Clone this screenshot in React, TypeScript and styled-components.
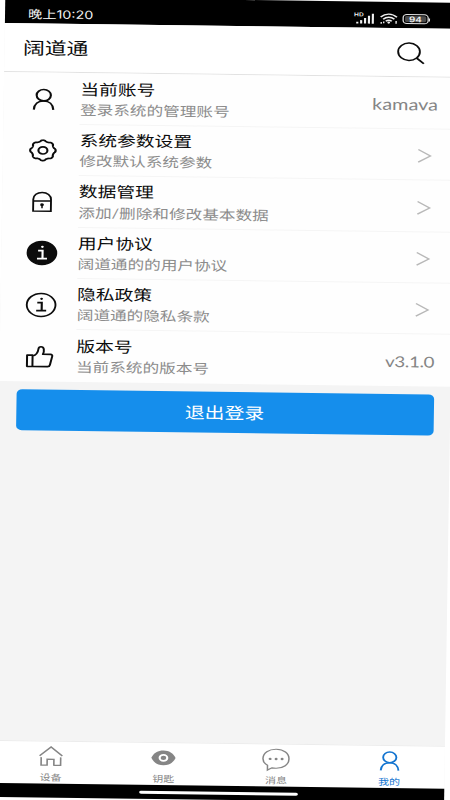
import React from "react";
import styled, { createGlobalStyle } from "styled-components";

const GlobalStyle = createGlobalStyle`
  * { box-sizing: border-box; }
  html, body { margin: 0; padding: 0; background: #fff; overflow: hidden; }
  svg { display: block; flex: none; overflow: visible; }
`;

const Viewport = styled.div`
  width: 450px;
  height: 800px;
  overflow: hidden;
  background: #fff;
`;

const Screen = styled.div`
  width: 361px;
  height: 800px;
  display: flex;
  flex-direction: column;
  background: #f4f4f4;
  color: #0c0c0c;
  font-family: Lato, "Noto Sans CJK SC", sans-serif;
  transform-origin: 0 0;
  transform: matrix(1.25, 0.0162, -0.0156, 1, 5.3, -3.1);
`;

const StatusBar = styled.div`
  height: 26px;
  flex: none;
  display: flex;
  align-items: flex-end;
  justify-content: space-between;
  padding: 0 21px 4px 18.5px;
  background: #000;
  color: #f4f4f4;
`;

const Clock = styled.div`
  font-family: Inter, "Noto Sans CJK SC", sans-serif;
  font-size: 11.4px;
  line-height: 12px;
  margin-bottom: -1.2px;
`;

const StatusIcons = styled.div`
  display: flex;
  align-items: flex-end;
  gap: 4.5px;
`;

const Battery = styled.div`
  position: relative;
  width: 20.5px;
  height: 10px;
  margin-right: 1.5px;
  border: 1px solid #e4e4e4;
  border-radius: 3.5px;
  background: #4c4c4c;
  background-clip: content-box;
  padding: 1px;
  display: flex;
  align-items: center;
  justify-content: center;
  font: 600 7.8px/8px Inter, sans-serif;
  &::after {
    content: "";
    position: absolute;
    right: -2.5px;
    top: 2.5px;
    width: 1.3px;
    height: 3px;
    background: #e4e4e4;
  }
`;

const Header = styled.header`
  height: 49.4px;
  flex: none;
  display: flex;
  align-items: center;
  justify-content: space-between;
  padding: 1px 24.6px 0 14.8px;
  background: #fff;
  border-bottom: 1px solid #e2e2e2;
`;

const AppTitle = styled.h1`
  margin: 0;
  font-size: 17.4px;
  line-height: 22px;
  font-weight: 400;
`;

const List = styled.div`
  flex: none;
  background: #fefefe;
`;

const Row = styled.div`
  display: flex;
  height: 51.4px;
`;

const RowIcon = styled.div`
  width: 61.2px;
  flex: none;
  display: flex;
  align-items: center;
  justify-content: center;
  padding-top: 1px;
  padding-left: 3px;
`;

const RowBody = styled.div<{ $divided: boolean; $link: boolean }>`
  flex: 1;
  display: flex;
  align-items: center;
  justify-content: space-between;
  padding-top: 1.4px;
  padding-right: ${(p) => (p.$link ? 18.6 : 13.5)}px;
  border-bottom: 1px solid ${(p) => (p.$divided ? "#f5f5f5" : "transparent")};
`;

const RowTitle = styled.div`
  font-size: 15px;
  line-height: 20px;
`;

const RowHint = styled.div`
  font-size: 13.3px;
  line-height: 20px;
  margin-top: 1.3px;
  color: #8c8c8c;
`;

const RowValue = styled.div<{ $numeric: boolean }>`
  font-size: ${(p) => (p.$numeric ? 15 : 15.900)}px;
  letter-spacing: ${(p) => (p.$numeric ? -0.3 : 0)}px;
  line-height: 20px;
  padding-top: 1px;
  color: #858585;
`;

const LogoutButton = styled.button`
  flex: none;
  height: 41px;
  margin: 8.5px 13.5px 0;
  padding: 0;
  border: 0;
  border-radius: 4.5px;
  background: #158eec;
  color: #fff;
  font-family: inherit;
  font-size: 15.9px;
`;

const Spacer = styled.div`
  flex: 1;
`;

const TabBar = styled.nav`
  height: 43.5px;
  flex: none;
  display: flex;
  background: #fff;
  border-top: 1px solid #ececec;
`;

const Tab = styled.div<{ $active?: boolean }>`
  flex: 1;
  display: flex;
  flex-direction: column;
  align-items: center;
  padding: 3.2px 0 0 1.6px;
  color: ${(p) => (p.$active ? "#1274d0" : "#858585")};
`;

const TabLabel = styled.div`
  font-size: 8.8px;
  line-height: 12px;
  margin-top: 4px;
`;

const HomeArea = styled.div`
  height: 14px;
  flex: none;
  display: flex;
  justify-content: center;
  padding-top: 5.5px;
  background: #000;
`;

const HomeIndicator = styled.div`
  width: 127px;
  height: 3px;
  border-radius: 2px;
  background: #fff;
`;

const PersonIcon = ({ height = 22, stroke = 1.7 }: { height?: number; stroke?: number }) => (
  <svg width="22" height={height} viewBox="0 0 22 22" fill="none" stroke="currentColor" strokeWidth={stroke}>
    <circle cx="11" cy="6.8" r="5.7" />
    <path d="M3.2 21.3C3.5 15.6 6.8 12.6 11 12.6s7.5 3 7.800 8.700" />
  </svg>
);

const TabPersonIcon = () => (
  <svg width="20" height="23" viewBox="0 0 20 23" fill="none" stroke="currentColor" strokeWidth="1.5">
    <circle cx="10" cy="8.300" r="5.300" />
    <path d="M2.900 21.500C3.200 16.400 6.200 13.600 10 13.600s6.800 2.800 7.100 7.900" />
  </svg>
);

const gearPath = (() => {
  const points: string[] = [];
  for (let i = 0; i <= 160; i++) {
    const angle = (i / 160) * Math.PI * 2;
    const wave = Math.cos(angle * 8);
    const radius = 9.6 + 0.6 * Math.sign(wave) * Math.pow(Math.abs(wave), 0.6);
    points.push(`${(11 + radius * Math.cos(angle)).toFixed(2)} ${(11 + radius * Math.sin(angle)).toFixed(2)}`);
  }
  return `M${points.join("L")}Z`;
})();

const GearIcon = () => (
  <svg width="22" height="22" viewBox="0 0 22 22" fill="none" stroke="currentColor" strokeWidth="1.7" strokeLinejoin="round">
    <path d={gearPath} />
    <circle cx="11" cy="11" r="3.6" />
  </svg>
);

const LockIcon = () => (
  <svg width="16" height="21" viewBox="0 0 16 21" fill="none" stroke="currentColor" strokeWidth="1.5">
    <path d="M.9 19.7V8C.9 3.8 4 1 8 1s7.1 2.8 7.1 7v11.7ZM.9 9.4h14.2" />
    <circle cx="8" cy="13.4" r="1.5" fill="currentColor" stroke="none" />
    <path d="M8 13.5v3.3" strokeWidth="1.2" />
  </svg>
);

const InfoIcon = ({ filled = false }: { filled?: boolean }) => {
  const ink = filled ? "#fff" : "currentColor";
  return (
    <svg width="25" height="25" viewBox="0 0 25 25" fill="none">
      <circle cx="12.5" cy="12.5" r="11.5" fill={filled ? "currentColor" : "none"} stroke="currentColor" strokeWidth="1.5" />
      <circle cx="12.8" cy="6.4" r="1.1" fill={ink} />
      <path d="M9.4 10.200h3.600v7.800M8.600 18.200h8" stroke={ink} strokeWidth="1.7" />
    </svg>
  );
};

const ThumbIcon = () => (
  <svg width="22" height="22" viewBox="0 0 22 22" fill="none" stroke="currentColor" strokeWidth="1.6" strokeLinejoin="round">
    <path d="M.9 9.8h4.4v11.3H.9zM5.3 10.8c3.2-1.3 4.3-3.8 4.6-7.2.2-3.1 3.8-3.1 4.3 0 .3 1.9-.1 3.6-.7 5.2h6.1c1 0 1.7.9 1.4 2l-1.7 8.4c-.2 1.2-.9 1.9-2 1.9h-12" />
  </svg>
);

const SearchIcon = () => (
  <svg width="22" height="22" viewBox="0 0 22 22" fill="none" stroke="#0c0c0c" strokeWidth="1.5">
    <circle cx="9.6" cy="9.6" r="8.7" />
    <path d="M15.8 15.8 21.6 21.4" strokeWidth="1.7" />
  </svg>
);

const ChevronIcon = () => (
  <svg width="10.5" height="17" viewBox="0 0 10.5 17" fill="none" stroke="#b8b8b8" strokeWidth="1.3">
    <path d="M.3 3.200 10 9.500 .3 15.800" />
  </svg>
);

const SignalIcon = () => (
  <svg width="15.5" height="11" viewBox="0 0 15.5 11" fill="#f0f0f0">
    <text x="-.8" y="3.8" fontSize="5.2" fontWeight="600" fontFamily="Inter, sans-serif">HD</text>
    <path d="M1 9.2h1.7V11H1zM4.1 7.6h1.7V11H4.1zM7.2 5.4h1.7V11H7.2zM10.3 3.2H12V11h-1.7zM13.4 1h1.7v10h-1.7z" />
  </svg>
);

const WifiIcon = () => (
  <svg width="14" height="11" viewBox="0 0 14 11" fill="none" stroke="#f0f0f0" strokeWidth="1.4">
    <path d="M.5 4.3C4.4.2 9.6.2 13.5 4.3M2.5 6.4c2.7-2.7 6.3-2.7 9 0M4.6 8.4c1.5-1.4 3.3-1.4 4.8 0" />
    <circle cx="7" cy="9.7" r="1.1" fill="#f0f0f0" stroke="none" />
    <path d="M1 9.3v1.7M3 8.8v1.6M12.9 8v2.8" strokeWidth="1.1" />
  </svg>
);

const HouseIcon = () => (
  <svg width="20" height="23" viewBox="0 0 20 23" fill="none" stroke="currentColor" strokeWidth="1.3">
    <path d="M.9 11.2 10 2.3l9.1 8.9M2.200 12.600v8h4.800M7 21.200v-6.600h5.400v6.600M12.400 20.600h5.400v-8" />
  </svg>
);

const EyeIcon = () => (
  <svg width="20" height="23" viewBox="0 0 20 23" fill="currentColor">
    <path d="M.3 11.8C2.3 6.7 5.7 4.400 10 4.400s7.700 2.300 9.700 7.400c-2 5.100-5.400 7.400-9.700 7.400S2.300 16.900 .3 11.800Z" />
    <circle cx="10" cy="11.800" r="3.9" fill="#fff" />
    <circle cx="10" cy="11.800" r="2.2" />
  </svg>
);

const ChatIcon = () => (
  <svg width="22" height="23" viewBox="0 0 22 23" fill="none" stroke="currentColor" strokeWidth="1.2">
    <path d="M4.300 22.600v-4.800C1.900 16.100.6 13.900.6 11.200.6 5.600 5.100 1.700 11.100 1.700s10.300 3.900 10.300 9.500-4.300 9.500-10.300 9.500c-1.300 0-2.300-.1-3.300-.4Z" />
    <g fill="currentColor" stroke="none">
      <circle cx="6.300" cy="11.400" r="1.200" />
      <circle cx="11.100" cy="11.400" r="1.200" />
      <circle cx="15.900" cy="11.400" r="1.200" />
    </g>
  </svg>
);

type Item = { icon: React.ReactNode; title: string; hint: string; value?: string; numeric?: boolean };

const items: Item[] = [
  { icon: <PersonIcon />, title: "当前账号", hint: "登录系统的管理账号", value: "kamava" },
  { icon: <GearIcon />, title: "系统参数设置", hint: "修改默认系统参数" },
  { icon: <LockIcon />, title: "数据管理", hint: "添加/删除和修改基本数据" },
  { icon: <InfoIcon filled />, title: "用户协议", hint: "阔道通的的用户协议" },
  { icon: <InfoIcon />, title: "隐私政策", hint: "阔道通的隐私条款" },
  { icon: <ThumbIcon />, title: "版本号", hint: "当前系统的版本号", value: "v3.1.0", numeric: true },
];

const tabs = [
  { icon: <HouseIcon />, label: "设备" },
  { icon: <EyeIcon />, label: "钥匙" },
  { icon: <ChatIcon />, label: "消息" },
  { icon: <TabPersonIcon />, label: "我的", active: true },
];

export default function App() {
  return (
    <Viewport>
      <GlobalStyle />
      <Screen>
        <StatusBar>
          <Clock>晚上10:20</Clock>
          <StatusIcons>
            <SignalIcon />
            <WifiIcon />
            <Battery>94</Battery>
          </StatusIcons>
        </StatusBar>
        <Header>
          <AppTitle>阔道通</AppTitle>
          <SearchIcon />
        </Header>
        <List>
          {items.map((item, index) => (
            <Row key={item.title}>
              <RowIcon>{item.icon}</RowIcon>
              <RowBody $divided={index < items.length - 1} $link={!item.value}>
                <div>
                  <RowTitle>{item.title}</RowTitle>
                  <RowHint>{item.hint}</RowHint>
                </div>
                {item.value ? <RowValue $numeric={!!item.numeric}>{item.value}</RowValue> : <ChevronIcon />}
              </RowBody>
            </Row>
          ))}
        </List>
        <LogoutButton>退出登录</LogoutButton>
        <Spacer />
        <TabBar>
          {tabs.map((tab) => (
            <Tab key={tab.label} $active={tab.active}>
              {tab.icon}
              <TabLabel>{tab.label}</TabLabel>
            </Tab>
          ))}
        </TabBar>
        <HomeArea>
          <HomeIndicator />
        </HomeArea>
      </Screen>
    </Viewport>
  );
}
